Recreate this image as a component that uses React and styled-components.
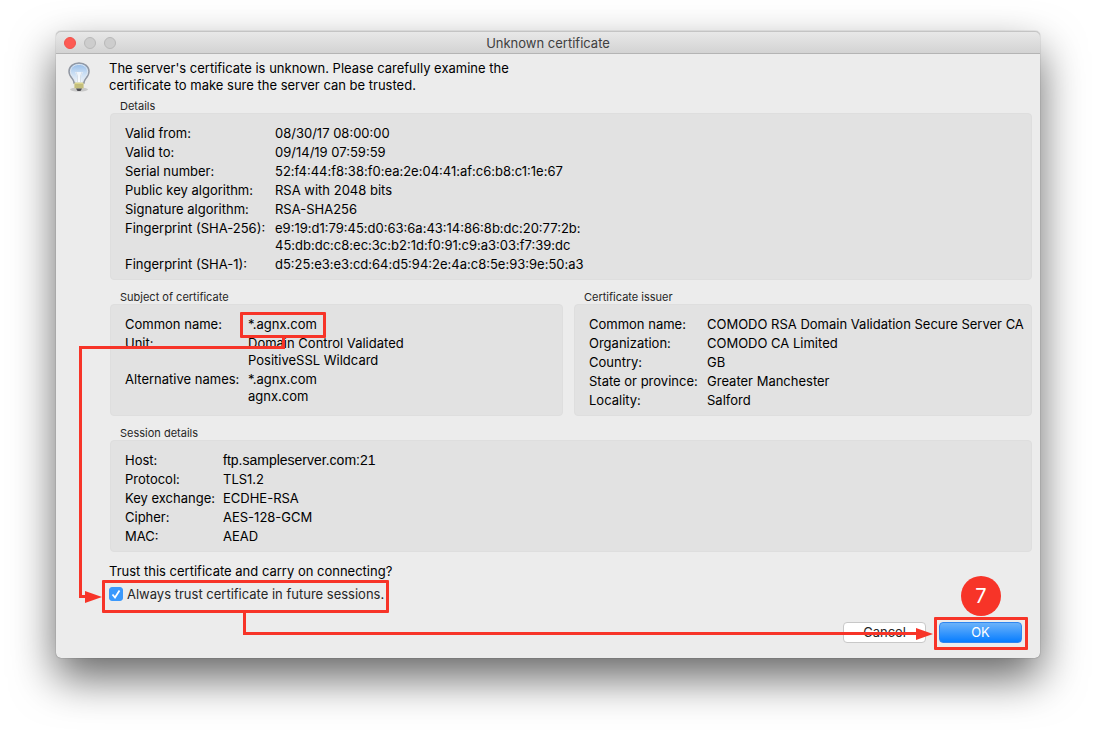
import React, { useState } from "react";
import styled, { createGlobalStyle } from "styled-components";

const details = [
  ["Valid from:", ["08/30/17 08:00:00"]],
  ["Valid to:", ["09/14/19 07:59:59"]],
  ["Serial number:", ["52:f4:44:f8:38:f0:ea:2e:04:41:af:c6:b8:c1:1e:67"]],
  ["Public key algorithm:", ["RSA with 2048 bits"]],
  ["Signature algorithm:", ["RSA-SHA256"]],
  [
    "Fingerprint (SHA-256):",
    [
      "e9:19:d1:79:45:d0:63:6a:43:14:86:8b:dc:20:77:2b:",
      "45:db:dc:c8:ec:3c:b2:1d:f0:91:c9:a3:03:f7:39:dc",
    ],
  ],
  ["Fingerprint (SHA-1):", ["d5:25:e3:e3:cd:64:d5:94:2e:4a:c8:5e:93:9e:50:a3"]],
];

const issuer = [
  ["Common name:", ["COMODO RSA Domain Validation Secure Server CA"]],
  ["Organization:", ["COMODO CA Limited"]],
  ["Country:", ["GB"]],
  ["State or province:", ["Greater Manchester"]],
  ["Locality:", ["Salford"]],
];

const BulbIcon = () => (
  <Bulb viewBox="0 0 24 30" aria-hidden="true">
    <defs>
      <linearGradient id="glass" x1="0" y1="0" x2="0" y2="1">
        <stop offset="0" stopColor="#8fb8e6" />
        <stop offset="0.45" stopColor="#c3daf3" />
        <stop offset="1" stopColor="#f2f6fa" />
      </linearGradient>
    </defs>
    <ellipse cx="12" cy="27.500" rx="9" ry="2" fill="#000" opacity="0.15" />
    <path
      d="M12 1C6.200 1 2 4.600 2 9.500c0 3.500 1.800 5.500 3.500 7.500 1.300 1.500 1.500 2.500 1.500 4h10c0-1.500.2-2.500 1.500-4C20.200 15 22 13 22 9.500 22 4.600 17.800 1 12 1z"
      fill="url(#glass)"
      stroke="#9298a3"
      strokeWidth="1.500"
    />
    <path
      d="M12 2.500C7 2.500 3.500 5.500 3.500 9.500c0 3 1.700 4.800 3.300 6.700 1.200 1.400 1.700 2.600 1.700 4.300h7c0-1.700.5-2.900 1.700-4.300 1.600-1.900 3.300-3.700 3.300-6.700 0-4-3.500-7-8.500-7z"
      fill="none"
      stroke="#dfe7f0"
    />
    <path d="M8 10h8l-2 4v6h-4v-6z" fill="#fff" opacity="0.7" />
    <path d="M9 10l1.500 4v6M15 10l-1.500 4v6" fill="none" stroke="#d7dfe8" />
    <rect x="7.500" y="20.500" width="9" height="6" rx="1" fill="#dcd68d" />
    <path d="M7.500 23h9M7.500 25h9" stroke="#aaa56a" />
    <path d="M9 26.500h6l-1.500 2.500h-3z" fill="#4b4b50" />
  </Bulb>
);

const Fields = ({ rows, labelWidth }) => (
  <FieldList $labelWidth={labelWidth}>
    {rows.map(([label, lines]) => (
      <React.Fragment key={label}>
        <dt>{label}</dt>
        <dd>
          {lines.map((line, i) => (
            <Line key={i}>{line}</Line>
          ))}
        </dd>
      </React.Fragment>
    ))}
  </FieldList>
);

const Group = ({ title, rows, labelWidth }) => (
  <section>
    <GroupTitle>{title}</GroupTitle>
    <GroupBox>
      <Fields rows={rows} labelWidth={labelWidth} />
    </GroupBox>
  </section>
);

const App = () => {
  const [trusted, setTrusted] = useState(true);

  const subject = [
    ["Common name:", [<Marked key="cn">*.agnx.com</Marked>]],
    ["Unit:", ["Domain Control Validated", "PositiveSSL Wildcard"]],
    ["Alternative names:", ["*.agnx.com", "agnx.com"]],
  ];

  const session = [
    ["Host:", [<HostName key="host">ftp.sampleserver.com:21</HostName>]],
    ["Protocol:", ["TLS1.2"]],
    ["Key exchange:", ["ECDHE-RSA"]],
    ["Cipher:", ["AES-128-GCM"]],
    ["MAC:", ["AEAD"]],
  ];

  return (
    <Desktop>
      <GlobalStyle />
      <Window>
        <TitleBar>
          <Lights>
            <Light type="button" aria-label="Close" $active />
            <Light type="button" aria-label="Minimize" />
            <Light type="button" aria-label="Zoom" />
          </Lights>
          <h1>Unknown certificate</h1>
        </TitleBar>
        <Body>
          <BulbIcon />
          <Content>
            <Intro>
              The server's certificate is unknown. Please carefully examine the
              <br />
              certificate to make sure the server can be trusted.
            </Intro>
            <Groups>
              <Group title="Details" rows={details} labelWidth={150} />
              <Pair>
                <Group title="Subject of certificate" rows={subject} labelWidth={123} />
                <Group title="Certificate issuer" rows={issuer} labelWidth={118} />
              </Pair>
              <Group title="Session details" rows={session} labelWidth={98} />
            </Groups>
            <Question>Trust this certificate and carry on connecting?</Question>
            <TrustLabel>
              <CheckBox>
                <input
                  type="checkbox"
                  checked={trusted}
                  onChange={(e) => setTrusted(e.target.checked)}
                />
                <svg width="14" height="14" viewBox="0 0 14 14" aria-hidden="true">
                  <path d="M3.500 7.500l2.500 3 4.500-7" fill="none" stroke="#fff" strokeWidth="1.800" />
                </svg>
              </CheckBox>
              Always trust certificate in future sessions.
            </TrustLabel>
            <Actions>
              <Button type="button">Cancel</Button>
              <OkSlot>
                <Button type="button" $primary>
                  OK
                </Button>
                <Step>7</Step>
              </OkSlot>
            </Actions>
          </Content>
        </Body>
        <NameDrop />
        <NameArrow />
        <OkArrow />
      </Window>
    </Desktop>
  );
};

export default App;

const red = "#f73428";

const GlobalStyle = createGlobalStyle`
  body {
    margin: 0;
    background: #fff;
    color: #000;
    font-family: Inter, "Liberation Sans", sans-serif;
    font-size: 13px;
    line-height: 17px;
  }
`;

const Desktop = styled.div`
  padding: 31px 56px 80px;
`;

const Window = styled.main`
  position: relative;
  border-radius: 5px;
  background-color: #ececec;
  box-shadow: 0 0 1px rgba(0, 0, 0, 0.6), 0 20px 44px rgba(0, 0, 0, 0.6);
`;

const TitleBar = styled.header`
  display: grid;
  grid-template-columns: 1fr auto 1fr;
  align-items: center;
  height: 20px;
  padding: 2px 8px 0;
  border-bottom: 1px solid #b4b4b4;
  border-radius: 5px 5px 0 0;
  background: linear-gradient(#e9e9e9, #d3d3d3);
  box-shadow: inset 0 1px #c4c4c4;

  h1 {
    margin: 0;
    color: #404040;
    font-size: 13px;
    font-weight: 400;
  }
`;

const Lights = styled.div`
  display: flex;
  gap: 8px;
`;

const Light = styled.button`
  width: 12px;
  height: 12px;
  padding: 0;
  border: 1px solid ${(props) => (props.$active ? "#f0524b" : "#b9b9b9")};
  border-radius: 50%;
  background-color: ${(props) => (props.$active ? "#fd5a53" : "#cdcdcd")};
`;

const Body = styled.div`
  display: flex;
  align-items: flex-start;
  gap: 18px;
  padding: 6px 8px 15px 11px;
`;

const Bulb = styled.svg`
  flex: none;
  width: 24px;
  height: 30px;
  padding-top: 2px;
`;

const Content = styled.div`
  flex: 1;
  min-width: 0;
`;

const Intro = styled.p`
  margin: 0 0 5px;
`;

const Groups = styled.div`
  display: flex;
  flex-direction: column;
  gap: 10px;
  margin-left: 1px;
`;

const Pair = styled.div`
  display: grid;
  grid-template-columns: minmax(0, 453fr) minmax(0, 458fr);
  gap: 11px;
`;

const GroupTitle = styled.h2`
  margin: 0;
  padding-left: 10px;
  color: #262626;
  font-size: 11px;
  font-weight: 400;
  line-height: 14px;
`;

const GroupBox = styled.div`
  box-sizing: border-box;
  min-height: 112px;
  padding: 11px 6px 6px 14px;
  border: 1px solid #dedede;
  border-radius: 4px;
  background-color: #e2e2e2;
`;

const FieldList = styled.dl`
  display: grid;
  grid-template-columns: ${(props) => props.$labelWidth}px 1fr;
  row-gap: 2px;
  margin: 0;
  white-space: nowrap;

  dd {
    margin: 0;
  }
`;

const Line = styled.div`
  height: 17px;
`;

const HostName = styled.span`
  font-family: "Liberation Sans", Arial, sans-serif;
  font-size: 14px;
`;

const Marked = styled.span`
  position: relative;

  &::after {
    content: "";
    position: absolute;
    inset: -4px -9px -6px -8px;
    border: 3px solid ${red};
    border-radius: 1px;
  }
`;

const Question = styled.p`
  margin: 11px 0 6px;
`;

const TrustLabel = styled.label`
  position: relative;
  display: inline-flex;
  align-items: center;
  gap: 4px;
  color: #262626;

  &::after {
    content: "";
    position: absolute;
    inset: -6px -5px -10px -7px;
    border: 3px solid ${red};
    border-radius: 1px;
  }
`;

const CheckBox = styled.span`
  display: grid;
  padding-bottom: 1px;

  input,
  svg {
    grid-area: 1 / 1;
  }

  input {
    appearance: none;
    width: 14px;
    height: 14px;
    margin: 0;
    border: 1px solid #bdbdbd;
    border-radius: 3px;
    background-color: #fff;
  }

  input:checked {
    border-color: #3b99fc;
    background-color: #3b99fc;
  }

  svg {
    pointer-events: none;
  }

  input:not(:checked) + svg {
    visibility: hidden;
  }
`;

const Actions = styled.div`
  display: flex;
  justify-content: flex-end;
  gap: 13px;
  margin-top: 17px;
  padding-right: 10px;
`;

const Button = styled.button`
  display: block;
  width: 83px;
  height: 21px;
  padding: 0;
  border: 1px solid ${(props) => (props.$primary ? "#2f86f0" : "#c8c8c8")};
  border-radius: 4px;
  background: ${(props) => (props.$primary ? "linear-gradient(#6cb3fa, #077dff)" : "#fff")};
  color: ${(props) => (props.$primary ? "#fff" : "#262626")};
  font-family: inherit;
  font-size: 13px;
  line-height: 17px;
`;

const OkSlot = styled.div`
  position: relative;

  &::after {
    content: "";
    position: absolute;
    inset: -5px -6px -7px -5px;
    border: 3px solid ${red};
    border-radius: 1px;
    pointer-events: none;
  }
`;

const Step = styled.span`
  position: absolute;
  bottom: 27px;
  left: 22px;
  width: 40px;
  border-radius: 50%;
  background-color: ${red};
  color: #fff;
  font-size: 20px;
  line-height: 40px;
  text-align: center;
`;

/* callout lines from the common name to the check box, and on to OK */
const NameDrop = styled.div`
  position: absolute;
  top: 306px;
  left: 23px;
  width: 203px;
  height: 9px;
  border-right: 3px solid ${red};
  border-bottom: 3px solid ${red};
  pointer-events: none;
`;

const arrowHead = `
  &::after {
    content: "";
    position: absolute;
    border: solid transparent;
    border-width: 6px 0 6px 17px;
    border-left-color: ${red};
  }
`;

const NameArrow = styled.div`
  position: absolute;
  top: 315px;
  left: 23px;
  width: 10px;
  height: 249px;
  border-bottom: 3px solid ${red};
  border-left: 3px solid ${red};
  pointer-events: none;
  ${arrowHead}

  &::after {
    right: -10px;
    bottom: -8px;
  }
`;

const OkArrow = styled.div`
  position: absolute;
  right: 122px;
  bottom: 23px;
  left: 187px;
  height: 20px;
  border-bottom: 3px solid ${red};
  border-left: 3px solid ${red};
  pointer-events: none;
  ${arrowHead}

  &::after {
    right: -15px;
    bottom: -8px;
  }
`;
